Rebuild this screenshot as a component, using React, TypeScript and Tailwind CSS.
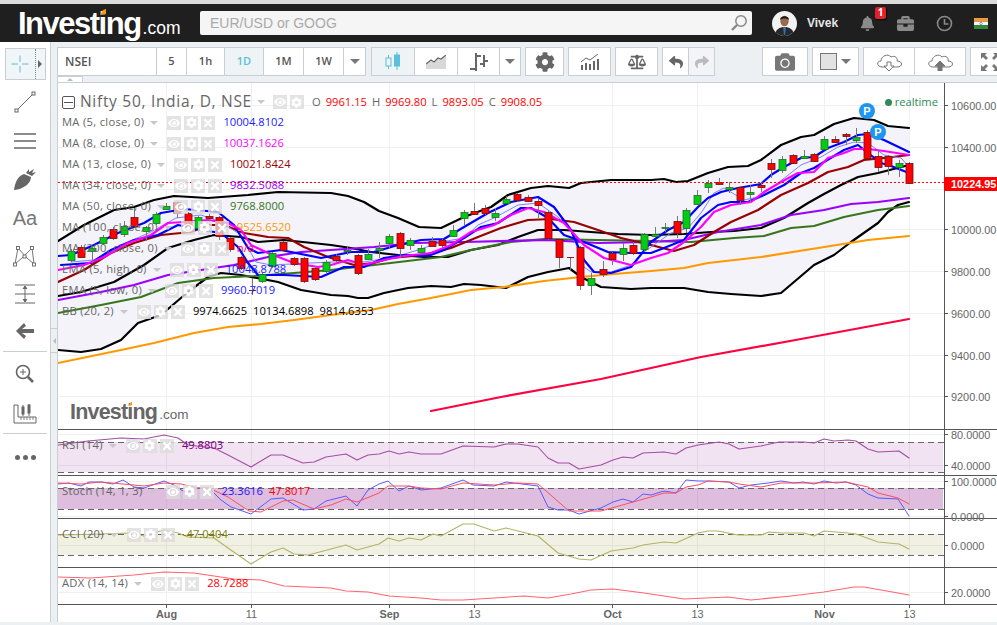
import React from "react";
import { FaCog, FaCamera, FaBell, FaBriefcase, FaReply, FaShare, FaEye, FaTimes, FaBalanceScale } from "react-icons/fa";

const pts = (a: number[][]) => a.map((p) => p.join(",")).join(" ");

const upper = [[57,241],[83,225],[113,210],[133,207],[153,200],[173,196],[207,198],[247,195],[277,192],[330,193],[347,196],[363,202],[378,211],[397,218],[418,227],[440,228],[463,217],[490,207],[507,195],[530,188],[547,186],[568,188],[580,183],[610,180],[650,180],[663,179],[675,182],[687,181],[707,173],[727,167],[747,166],[760,160],[780,145],[800,137],[813,135],[833,124],[853,118],[873,120],[887,126],[908,128]];
const lower = [[57,350],[80,352],[100,349],[120,340],[137,323],[160,315],[187,292],[207,277],[220,273],[240,275],[277,282],[300,290],[330,295],[347,296],[357,298],[367,298],[383,293],[407,288],[430,286],[450,287],[463,284],[480,285],[505,288],[527,277],[547,272],[563,269],[568,268],[580,277],[600,287],[630,289],[650,288],[683,288],[707,292],[730,294],[760,296],[780,293],[793,282],[813,265],[833,255],[850,242],[877,223],[887,212],[897,205],[908,202]];
const mid = [[57,296],[80,292],[113,282],[143,265],[167,248],[193,240],[213,235],[240,237],[257,242],[283,240],[330,245],[350,248],[370,252],[397,255],[423,257],[447,257],[470,250],[497,245],[517,237],[537,230],[563,230],[590,232],[617,234],[650,235],[683,234],[710,232],[733,231],[760,228],[783,218],[807,203],[823,194],[840,185],[857,177],[877,173],[908,165]];
const blueA = [[57,256],[70,255],[93,245],[117,233],[143,223],[160,213],[183,209],[217,212],[233,225],[247,248],[257,253],[280,250],[320,258],[350,252],[373,252],[397,245],[420,240],[443,239],[463,227],[487,213],[510,202],[537,197],[553,207],[570,230],[583,260],[593,272],[610,273],[630,267],[650,242],[667,230],[683,222],[697,207],[707,198],[720,192],[737,188],[760,184],[770,175],[783,167],[800,158],[813,157],[827,148],[843,142],[857,135],[867,134],[883,140],[908,152]];
const blueB = [[60,265],[90,263],[110,250],[133,240],[157,235],[177,225],[200,230],[220,233],[237,247],[247,263],[257,275],[283,275],[320,277],[343,267],[363,267],[383,258],[403,255],[427,256],[443,250],[463,238],[480,227],[497,223],[520,208],[530,208],[547,218],[563,235],[583,242],[607,252],[630,253],[650,253],[663,248],[683,240],[700,218],[717,205],[730,202],[747,202],[763,195],[783,185],[800,173],[813,168],[823,162],[843,150],[857,145],[867,153],[880,163],[890,166],[908,173]];
const thin = [[70,262],[93,260],[120,245],[150,232],[175,218],[200,215],[220,222],[240,235],[255,262],[270,265],[330,262],[363,262],[393,257],[417,250],[440,242],[463,238],[477,225],[493,218],[517,205],[537,203],[557,217],[570,230],[583,267],[590,272],[610,272],[630,265],[643,252],[650,247],[670,233],[687,228],[700,213],[713,193],[723,188],[743,200],[757,197],[777,183],[800,165],[820,157],[837,147],[853,142],[867,143],[883,155],[900,158],[908,167]];
const magenta = [[57,270],[83,265],[103,257],[127,243],[150,235],[167,223],[183,222],[207,220],[227,223],[240,230],[250,245],[267,253],[293,263],[317,267],[330,265],[347,260],[363,265],[383,260],[403,256],[430,253],[450,245],[470,232],[493,225],[510,215],[527,208],[543,212],[563,223],[583,245],[603,258],[630,265],[650,258],[667,253],[683,242],[700,227],[713,212],[730,205],[750,202],[763,192],[780,182],[797,173],[813,172],[827,158],[843,153],[853,149],[867,149],[883,151],[908,155]];
const darkRed = [[57,282],[83,270],[110,253],[133,243],[160,235],[190,232],[207,225],[223,225],[243,233],[267,237],[287,238],[303,247],[327,257],[353,265],[373,263],[390,258],[423,255],[450,248],[477,237],[500,228],[527,220],[550,219],[573,222],[597,230],[620,238],[650,245],[673,251],[693,245],[713,232],[730,222],[757,210],[780,195],[807,183],[827,172],[847,167],[863,160],[883,158],[908,155]];
const purple = [[57,300],[100,292],[133,285],[167,275],[200,270],[233,265],[267,257],[300,252],[330,250],[373,247],[413,243],[463,242],[547,240],[597,243],[650,242],[683,240],[717,232],[760,225],[790,215],[823,210],[850,204],[877,202],[908,198]];
const green = [[57,313],[100,305],[140,297],[177,283],[213,278],[253,276],[293,273],[330,270],[373,265],[440,257],[470,250],[510,242],[543,239],[650,241],[690,242],[733,238],[763,236],[790,228],[813,226],[843,217],[877,210],[908,206]];
const orange = [[57,363],[120,350],[153,343],[193,333],[227,327],[260,324],[293,320],[330,315],[370,310],[397,304],[430,298],[470,290],[503,287],[543,281],[580,277],[613,274],[650,271],[683,268],[707,263],[760,257],[817,248],[867,240],[908,236]];
const crimson = [[430,411],[500,397],[600,379],[700,357],[800,339],[908,319]];
const rsi = [[57,445],[87,441],[120,438],[143,439],[163,435],[177,438],[187,445],[213,448],[227,455],[250,467],[270,455],[282,455],[302,463],[313,462],[325,457],[345,454],[356,460],[367,455],[378,454],[388,451],[398,454],[408,452],[420,454],[440,454],[462,446],[493,447],[505,444],[517,444],[537,447],[547,458],[557,463],[568,463],[578,469],[600,465],[612,460],[622,457],[632,458],[642,453],[663,452],[675,454],[685,448],[697,445],[718,442],[728,444],[738,449],[760,446],[778,442],[790,442],[803,442],[813,443],[823,439],[833,441],[847,440],[855,441],[867,449],[877,452],[898,451],[908,458]];
const stochB = [[57,484],[68,483],[80,486],[88,482],[100,482],[112,484],[122,480],[133,487],[143,488],[163,481],[173,485],[185,493],[197,488],[208,488],[220,500],[230,507],[250,514],[270,499],[282,498],[302,510],[313,509],[325,501],[345,496],[356,506],[367,490],[378,484],[387,481],[398,491],[408,486],[420,490],[440,488],[462,480],[472,485],[493,486],[505,482],[537,486],[547,507],[557,510],[568,510],[578,514],[600,508],[612,502],[622,499],[632,502],[642,494],[650,495],[663,491],[675,493],[685,480],[697,481],[707,481],[728,482],[738,488],[750,485],[767,483],[780,481],[793,483],[802,482],[813,484],[823,481],[835,483],[845,482],[855,485],[867,494],[877,498],[897,499],[908,516]];
const stochR = [[57,483],[80,484],[100,482],[122,484],[143,486],[163,483],[180,484],[197,488],[208,488],[227,497],[248,511],[260,512],[282,501],[292,500],[313,509],[330,505],[345,499],[356,502],[378,493],[387,486],[408,486],[420,488],[440,489],[462,483],[493,485],[517,483],[537,484],[568,511],[600,511],[632,502],[650,497],[663,493],[675,493],[685,487],[697,485],[707,481],[728,482],[738,484],[760,487],[780,483],[813,483],[845,482],[867,487],[877,493],[897,498],[908,504]];
const cci = [[57,535],[100,534],[128,533],[143,536],[163,530],[177,533],[187,537],[213,538],[227,548],[250,564],[270,552],[282,548],[293,554],[307,555],[330,549],[345,545],[356,550],[367,547],[378,544],[387,538],[398,541],[408,538],[420,540],[432,534],[440,536],[462,524],[473,524],[493,531],[505,528],[537,536],[557,553],[578,559],[590,560],[610,551],[632,548],[642,545],[663,542],[675,543],[697,533],[707,531],[717,531],[737,535],[760,535],[768,532],[780,533],[803,533],[813,536],[823,531],[847,533],[855,534],[877,542],[898,544],[908,549]];
const adx = [[57,577],[90,578],[133,575],[163,572],[193,573],[233,579],[260,580],[283,586],[330,588],[345,591],[367,592],[388,596],[420,598],[440,600],[462,600],[493,598],[523,596],[547,598],[570,594],[590,590],[612,589],[643,593],[683,599],[727,597],[750,600],[790,596],[823,592],[853,587],[863,587],[897,593],[908,595]];

const candles: [number, number, number, number, number, string][] = [
[70,251,260,249,262,"g"],[80,247,257,245,258,"r"],[91,248,251,246,263,"g"],[102,237,243,235,245,"g"],[112,229,238,227,240,"r"],[123,226,234,221,237,"g"],[133,217,226,208,227,"r"],[145,227,231,226,241,"g"],[155,214,223,212,225,"g"],[165,206,209,203,209,"g"],[176,202,213,201,218,"r"],[187,213,227,212,229,"r"],[197,217,228,216,232,"g"],[208,216,218,214,222,"r"],[218,217,236,216,240,"r"],[229,238,249,237,252,"r"],[240,257,268,256,270,"r"],[251,290,290,278,295,"d"],[261,274,281,272,283,"g"],[271,253,266,252,268,"g"],[282,242,250,241,252,"r"],[293,258,264,257,266,"r"],[303,258,281,257,283,"r"],[314,268,279,266,281,"r"],[325,262,271,260,273,"g"],[335,256,260,254,263,"r"],[346,250,251,246,255,"g"],
[357,255,273,254,275,"r"],[367,254,259,249,260,"g"],[378,248,250,242,258,"g"],[388,236,243,234,249,"g"],[399,233,248,232,258,"r"],[409,240,245,238,250,"g"],[420,248,252,245,254,"g"],[431,241,246,237,246,"r"],[441,240,245,239,248,"r"],[452,230,236,225,237,"g"],[463,212,218,210,225,"g"],[473,211,214,203,215,"r"],[484,208,213,205,215,"r"],[494,213,217,208,221,"g"],[505,199,203,196,204,"g"],[516,194,200,193,202,"r"],[527,197,201,195,202,"r"],[537,201,205,199,218,"r"],[547,212,238,211,240,"r"],[558,239,257,238,268,"r"],[569,257,257,257,270,"d"],[579,247,285,246,290,"r"],[590,278,285,273,295,"g"],[602,269,274,261,277,"r"],[611,253,259,252,265,"r"],[622,248,254,243,261,"g"],[632,245,253,242,255,"r"],[643,234,249,233,252,"g"],[654,234,236,227,238,"g"],[664,227,228,223,232,"g"],[676,221,233,216,238,"r"],[685,210,228,208,233,"g"],[696,195,204,190,205,"g"],[707,183,187,180,193,"g"],[718,182,184,178,185,"r"],[728,187,189,182,193,"g"],[739,187,200,186,205,"r"],[749,192,194,185,203,"g"],[760,185,187,183,192,"r"],[770,163,169,159,178,"r"],[781,159,170,156,173,"g"],[792,155,163,154,164,"r"],[803,156,158,150,159,"g"],[813,154,161,153,162,"r"],[823,139,149,136,150,"g"],[834,139,142,136,143,"r"],[845,134,136,133,145,"r"],[855,137,140,128,143,"g"],[866,132,158,130,159,"r"],[877,156,167,150,172,"r"],[887,156,166,155,175,"r"],[898,163,167,160,177,"g"],[908,163,183,162,184,"r"],
];

const Line = ({ d, c, w = 2.2 }: { d: number[][]; c: string; w?: number }) => (
  <polyline points={pts(d)} fill="none" stroke={c} strokeWidth={w} strokeLinejoin="round" strokeLinecap="round" />
);

function Chart() {
  const grid = [165, 250, 388, 473, 611, 696, 823, 908];
  const hg = [105, 147, 189, 229, 271, 313, 355, 396, 434, 465, 481, 516, 545, 592];
  const ticks: [number, string][] = [[105,"10600.00"],[147,"10400.00"],[229,"10000.00"],[271,"9800.00"],[313,"9600.00"],[355,"9400.00"],[396,"9200.00"],[434,"80.0000"],[465,"40.0000"],[481,"100.0000"],[516,"0.0000"],[545,"0.0000"],[592,"20.0000"]];
  const xl: [number, string, boolean][] = [[165,"Aug",true],[250,"11",false],[388,"Sep",true],[473,"13",false],[611,"Oct",true],[696,"13",false],[823,"Nov",true],[908,"13",false]];
  const dash = "6 4";
  return (
    <svg viewBox="57 83 940 539" width={940} height={539} className="absolute left-0 top-0 block">
      {grid.map((x) => <line key={x} x1={x + 0.5} x2={x + 0.5} y1={83} y2={604} stroke="#f0f0f0" />)}
      {hg.map((y) => <line key={y} x1={57} x2={943} y1={y + 0.5} y2={y + 0.5} stroke="#f0f0f0" />)}

      <polygon points={pts([...upper, ...[...lower].reverse()])} fill="#f3f3f9" />
      <Line d={upper} c="#000" />
      <Line d={lower} c="#000" />
      <Line d={mid} c="#000" />
      <Line d={orange} c="#ff9900" />
      <Line d={green} c="#38761d" />
      <Line d={purple} c="#9900ff" />
      <Line d={darkRed} c="#990000" />
      <Line d={thin} c="#8080ff" w={1} />
      <Line d={blueB} c="#0000ff" />
      <Line d={blueA} c="#0000ff" />
      <Line d={magenta} c="#ff00ff" />
      <Line d={crimson} c="#ff0040" />

      {candles.map(([x, t, b, hi, lo, k], i) => (
        <g key={i}>
          <line x1={x + 0.5} x2={x + 0.5} y1={hi} y2={lo} stroke="#777" />
          {k === "d" ? (
            <line x1={x - 3} x2={x + 4} y1={t + 0.5} y2={t + 0.5} stroke="#8b1a1a" />
          ) : (
            <rect x={x - 3} y={t + 0.5} width={7} height={b - t} fill={k === "g" ? "#00cc11" : "#ff0000"} stroke={k === "g" ? "#2a6a2a" : "#6a1010"} strokeWidth={0.8} />
          )}
        </g>
      ))}

      <line x1={57} x2={943} y1={182.5} y2={182.5} stroke="#ff0000" strokeDasharray="2 2" />

      <circle cx={866} cy={111} r={8} fill="#1e96f0" />
      <text x={866} y={115} textAnchor="middle" fill="#fff" fontSize={11} fontWeight={700} fontFamily="Liberation Sans">P</text>
      <circle cx={877} cy={132} r={8} fill="#1e96f0" />
      <text x={877} y={136} textAnchor="middle" fill="#fff" fontSize={11} fontWeight={700} fontFamily="Liberation Sans">P</text>

      <rect x={57} y={442} width={885} height={30} fill="#800080" fillOpacity={0.11} />
      <rect x={57} y={488} width={885} height={21} fill="#800080" fillOpacity={0.26} />
      <rect x={57} y={534} width={885} height={21} fill="#808000" fillOpacity={0.11} />
      {[442, 472, 488, 509, 534, 555].map((y) => (
        <line key={y} x1={57} x2={943} y1={y + 0.5} y2={y + 0.5} stroke="#666" strokeDasharray={dash} />
      ))}
      <Line d={rsi} c="#a64ca6" w={1.1} />
      <Line d={stochB} c="#5a5aff" w={1} />
      <Line d={stochR} c="#ff4d5e" w={1} />
      <Line d={cci} c="#b3b366" w={1.1} />
      <Line d={adx} c="#ff6670" w={1.1} />

      {[429, 475, 518, 567, 604].map((y) => <line key={y} x1={57} x2={997} y1={y + 0.5} y2={y + 0.5} stroke="#555" />)}
      <line x1={943.5} x2={943.5} y1={83} y2={604} stroke="#555" />
      {ticks.map(([y, t]) => (
        <g key={t + y}>
          <line x1={943} x2={947} y1={y + 0.5} y2={y + 0.5} stroke="#555" />
          <text x={950} y={y + 4.5} fontSize={10.9} fill="#666" fontFamily="Liberation Sans">{t}</text>
        </g>
      ))}
      <rect x={943} y={177} width={54} height={14} fill="#ff0000" />
      <text x={950} y={188} fontSize={10.9} fontWeight={700} fill="#fff" fontFamily="Liberation Sans">10224.95</text>

      {xl.map(([x, t, b]) => (
        <g key={x}>
          <line x1={x + 0.5} x2={x + 0.5} y1={604} y2={608} stroke="#555" />
          <text x={x + 0.5} y={618} textAnchor="middle" fontSize={10.9} fontWeight={b ? 700 : 400} fill="#666" fontFamily="Liberation Sans">{t}</text>
        </g>
      ))}
    </svg>
  );
}

const Caret = () => <span className="ml-[6px] mr-[9px] h-0 w-0 border-x-[4px] border-t-[4px] border-x-transparent border-t-[#c8c8c8]" />;

const Btns = ({ x = true }: { x?: boolean }) => (
  <span className="flex gap-[3px]">
    <span className="flex h-[14px] w-[14px] items-center justify-center bg-[#dcdcdc]/80 text-white"><FaEye size={12} /></span>
    <span className="flex h-[14px] w-[14px] items-center justify-center bg-[#dcdcdc]/80 text-white"><FaCog size={11} /></span>
    {x && <span className="flex h-[14px] w-[14px] items-center justify-center bg-[#dcdcdc]/80 text-white"><FaTimes size={12} /></span>}
  </span>
);

const Row = ({ label, v }: { label: string; v: [string, string][] }) => (
  <div className="flex h-[21px] items-center whitespace-nowrap text-[11.2px] text-[#666]">
    <span className="tracking-[0.3px]">{label}</span>
    <Caret />
    <Btns />
    <span className="ml-[8px] flex gap-[6px]">
      {v.map(([t, c]) => <span key={t} style={{ color: c }}>{t}</span>)}
    </span>
  </div>
);

const Cell = ({ w, children, active, last }: { w: string; children?: React.ReactNode; active?: boolean; last?: boolean }) => (
  <div className={`flex items-center justify-center ${w} ${last ? "" : "border-r border-[#c8ced3]"} ${active ? "bg-[#eef3f6]" : "bg-white"}`}>{children}</div>
);

const TCaret = () => <span className="h-0 w-0 border-x-[5px] border-t-[5px] border-x-transparent border-t-[#777]" />;

const Group = ({ children, className = "" }: { children: React.ReactNode; className?: string }) => (
  <div className={`flex h-[29px] shrink-0 border border-[#c8ced3] ${className}`}>{children}</div>
);

const TText = ({ t, c = "text-[#555]" }: { t: string; c?: string }) => <span className={`text-[11px] font-semibold ${c}`}>{t}</span>;

const Logo = ({ big }: { big: boolean }) =>
  big ? (
    <div className="relative flex items-baseline font-['Liberation_Sans',sans-serif] text-white">
      <span className="text-[31px] font-bold leading-none tracking-[-1.5px]">Investing</span>
      <span className="ml-[2px] text-[17.5px] leading-none">.com</span>
      <svg width="6" height="6" className="absolute left-[82px] top-[1px]"><polygon points="0,6 3,1 6,0 6,5" fill="#f39c12" /></svg>
    </div>
  ) : (
    <div className="relative flex items-baseline font-['Liberation_Sans',sans-serif] text-[#666]">
      <span className="text-[21.5px] font-bold leading-none tracking-[-0.8px]">Investing</span>
      <span className="ml-[2px] text-[13.5px] leading-none">.com</span>
      <svg width="4" height="4" className="absolute left-[58px] top-[0px]"><polygon points="0,4 2,1 4,0 4,3" fill="#f39c12" /></svg>
    </div>
  );

const Side = ({ h, children }: { h: string; children: React.ReactNode }) => (
  <div className={`flex ${h} w-full items-center justify-center text-[#666]`}>{children}</div>
);

export default function App() {
  return (
    <div className="flex h-[625px] w-[997px] flex-col overflow-hidden bg-[#edf0f3] font-['Open_Sans',sans-serif]">
      <div className="h-[4px] shrink-0 bg-[#dcdcdc]" />
      {/* Header */}
      <header className="flex h-[38px] shrink-0 items-center bg-[#1f1f1f] pl-[18px]">
        <div className="w-[182px] shrink-0 pt-[1px]"><Logo big /></div>
        <div className="flex h-[24px] w-[552px] items-center justify-between rounded-[2px] bg-[#f5f5f5] pl-[10px] pr-[4px] font-['Liberation_Sans',sans-serif] text-[14px] text-[#aaa]">
          <span>EUR/USD or GOOG</span>
          <svg width="18" height="18" viewBox="0 0 18 18" fill="none" stroke="#888" strokeWidth="1.5"><circle cx="11" cy="7" r="5.2" /><line x1="7" y1="11" x2="2" y2="16" strokeWidth="2.4" /></svg>
        </div>
        <svg width="25" height="25" viewBox="0 0 25 25" className="ml-[20px] shrink-0">
          <clipPath id="av"><circle cx="12.5" cy="12.5" r="12.5" /></clipPath>
          <g clipPath="url(#av)">
            <rect width="25" height="25" fill="#f2f2f2" />
            <path d="M3 25 C3 18 8 16 12.5 16 C17 16 22 18 22 25Z" fill="#26292d" />
            <path d="M11 16 L14 16 L13 24 L12 24Z" fill="#3d6fa5" />
            <ellipse cx="12.5" cy="10" rx="4.2" ry="5.2" fill="#9a6a4a" />
            <path d="M8 9 C8 4 17 4 17 9 C15 7 10 7 8 9Z" fill="#1a1a1a" />
          </g>
        </svg>
        <span className="ml-[10px] font-['Liberation_Sans',sans-serif] text-[12px] font-bold text-[#e6e6e6]">Vivek</span>
        <div className="relative ml-[22px] text-[#8a8a8a]">
          <FaBell size={15} />
          <span className="absolute left-[15px] top-[-9px] flex h-[12px] w-[11px] items-center justify-center rounded-[2px] bg-[#e0202a] text-[10px] font-bold text-white shadow-[1px_1px_1px_#000]">1</span>
        </div>
        <span className="ml-[22px] text-[#8a8a8a]"><FaBriefcase size={17} /></span>
        <svg width="17" height="17" viewBox="0 0 17 17" fill="none" stroke="#8a8a8a" strokeWidth="1.6" className="ml-[22px]"><circle cx="8.5" cy="8.5" r="7" /><path d="M8.5 4 V9 H12.5" /></svg>
        <svg width="14" height="11" viewBox="0 0 14 11" className="ml-[21px]">
          <rect width="14" height="3.7" fill="#f29a3a" /><rect y="3.7" width="14" height="3.6" fill="#f4f4f4" /><rect y="7.3" width="14" height="3.7" fill="#2e8b3d" /><circle cx="7" cy="5.5" r="1.2" fill="none" stroke="#446" strokeWidth="0.5" />
        </svg>
      </header>

      <div className="flex min-h-0 flex-1">
        {/* Sidebar */}
        <aside className="flex w-[51px] shrink-0 flex-col items-center border-r border-[#c8ced3] bg-white">
          <div className="mt-[6px] flex h-[32px] w-[41px] shrink-0 border border-[#c8ced3] bg-[#f0f5f8]">
            <div className="flex w-[30px] items-center justify-center border-r border-dotted border-[#888]">
              <svg width="18" height="18" viewBox="0 0 18 18" stroke="#5bc0de" strokeWidth="1"><path d="M9 0.5 V7 M9 11 V17.5 M0.5 9 H7 M11 9 H17.5" /></svg>
            </div>
            <div className="flex flex-1 items-center justify-center"><span className="h-0 w-0 border-y-[4px] border-l-[4px] border-y-transparent border-l-[#666]" /></div>
          </div>
          <Side h="h-[41px] mt-[1px]"><svg width="22" height="22" viewBox="0 0 22 22" fill="none" stroke="#666"><rect x="1" y="18" width="3" height="3" /><rect x="18" y="1" width="3" height="3" /><line x1="4" y1="18" x2="18" y2="4" /></svg></Side>
          <Side h="h-[38px]"><svg width="22" height="16" viewBox="0 0 22 16" stroke="#666" strokeWidth="1.3"><path d="M0 1 H22 M0 8 H22 M0 15 H22" /></svg></Side>
          <Side h="h-[40px]"><svg width="22" height="22" viewBox="0 0 22 22" fill="#666"><path d="M0 21 C1 13 4 7 10 5 L17 8 C17 14 10 20 0 21Z" /><path d="M12 4 L15 0 L15 3 L20 0 L18 4 L22 3 L18 7Z" /></svg></Side>
          <Side h="h-[35px]"><span className="font-['Liberation_Sans',sans-serif] text-[20px] leading-none text-[#777]">Aa</span></Side>
          <Side h="h-[42px]"><svg width="24" height="24" viewBox="0 0 24 24" fill="none" stroke="#666" strokeWidth="0.9"><path d="M5 4 L2 20 M5 4 L14 14 L21 20 M19 4 L21 20 M19 4 L9 14 L2 20" /><rect x="3.5" y="2.5" width="3" height="3" fill="#fff" /><rect x="17.5" y="2.5" width="3" height="3" fill="#fff" /><rect x="0.5" y="19" width="3" height="3" fill="#fff" /><rect x="19.5" y="19" width="3" height="3" fill="#fff" /><rect x="10" y="11" width="3" height="3" fill="#fff" /></svg></Side>
          <Side h="h-[34px]"><svg width="20" height="20" viewBox="0 0 20 20" fill="none" stroke="#666"><path d="M0 1 H20 M0 10 H20 M0 19 H20 M10 2 V18" /><path d="M8 5 L10 2 L12 5 M8 15 L10 18 L12 15" fill="#666" /></svg></Side>
          <Side h="h-[40px]"><svg width="18" height="16" viewBox="0 0 18 16" fill="#666"><path d="M8 0 L0 8 L8 16 L10 13 L6 10 H18 V6 H6 L10 3Z" /></svg></Side>
          <div className="h-px w-[44px] shrink-0 bg-[#c8ced3]" />
          <Side h="h-[43px]"><svg width="20" height="20" viewBox="0 0 20 20" fill="none" stroke="#666"><circle cx="8" cy="8" r="6.5" strokeWidth="1.6" /><path d="M8 5 V11 M5 8 H11" /><line x1="13" y1="13" x2="18" y2="18" strokeWidth="2.6" /></svg></Side>
          <Side h="h-[38px]"><svg width="24" height="20" viewBox="0 0 24 20" fill="none" stroke="#666"><path d="M1 1 V19 H23 V13 H5 V1 Z" /><path d="M8 13 V16 M11 13 V16 M14 13 V16 M17 13 V16 M20 13 V16" strokeWidth="0.8" /><rect x="9" y="3" width="2" height="7" fill="#666" /><rect x="15" y="1" width="2" height="8" fill="#666" /><path d="M10 1 V12 M16 0 V12" /></svg></Side>
          <div className="h-px w-[44px] shrink-0 bg-[#c8ced3]" />
          <Side h="h-[46px]"><span className="flex gap-[3px]"><span className="h-[5px] w-[5px] rounded-full bg-[#666]" /><span className="h-[5px] w-[5px] rounded-full bg-[#666]" /><span className="h-[5px] w-[5px] rounded-full bg-[#666]" /></span></Side>
        </aside>

        <div className="relative w-[6px] shrink-0">
          <div className="absolute left-0 top-[286px] flex h-[25px] w-[6px] items-center justify-center border-y border-[#c8ced3]">
            <span className="h-0 w-0 border-y-[3px] border-r-[3px] border-y-transparent border-r-[#bbb]" />
          </div>
        </div>

        <main className="flex min-w-0 flex-1 flex-col">
          {/* Toolbar */}
          <div className="relative h-[41px] shrink-0 border-b border-[#c8ced3] pt-[5px]">
            <div className="flex gap-[4px]">
              <Group className="mr-[1px] w-[309px]">
                <Cell w="w-[99px] !justify-start pl-[7px]"><span className="text-[12px] font-semibold text-[#555]">NSEI</span></Cell>
                <Cell w="w-[30px]"><TText t="5" /></Cell>
                <Cell w="w-[38px]"><TText t="1h" /></Cell>
                <Cell w="w-[39px]" active><TText t="1D" c="text-[#5bc0de]" /></Cell>
                <Cell w="w-[40px]"><TText t="1M" /></Cell>
                <Cell w="w-[40px]"><TText t="1W" /></Cell>
                <Cell w="flex-1" last><TCaret /></Cell>
              </Group>
              <Group className="w-[150px]">
                <Cell w="w-[43px]" active>
                  <svg width="16" height="20" viewBox="0 0 16 20" stroke="#5bc0de" fill="none"><path d="M3.5 3 V17 M12 0 V18" /><rect x="1" y="6" width="5" height="8" fill="#eef3f6" /><rect x="9.5" y="3" width="5" height="11" fill="#5bc0de" /></svg>
                </Cell>
                <Cell w="w-[43px]">
                  <svg width="20" height="14" viewBox="0 0 20 14"><path d="M0 9 L5 5 L8 7 L12 3 L15 4 L20 0 V14 H0Z" fill="#d8d8d8" /><path d="M0 9 L5 5 L8 7 L12 3 L15 4 L20 0" fill="none" stroke="#666" strokeWidth="1.2" /></svg>
                </Cell>
                <Cell w="w-[42px]">
                  <svg width="18" height="18" viewBox="0 0 18 18" fill="none" stroke="#666" strokeWidth="2"><path d="M6 0 V18 M6 3 H11 M0 16 H6 M14 2 V14 M14 8 H18 M10 11 H14" /></svg>
                </Cell>
                <Cell w="flex-1" last><TCaret /></Cell>
              </Group>
              <Group className="w-[39px]"><Cell w="w-full" last><span className="text-[#666]"><FaCog size={20} /></span></Cell></Group>
              <Group className="w-[43px]"><Cell w="w-full" last>
                <svg width="18" height="16" viewBox="0 0 18 16" fill="#666"><rect x="0" y="11" width="2" height="5" /><rect x="4" y="9" width="2" height="7" /><rect x="8" y="10" width="2" height="6" /><rect x="12" y="7" width="2" height="9" /><rect x="16" y="5" width="2" height="11" /><path d="M0 8 L5 4 L9 6 L17 0" fill="none" stroke="#666" /></svg>
              </Cell></Group>
              <Group className="w-[43px]"><Cell w="w-full" last><span className="text-[#666]"><FaBalanceScale size={18} /></span></Cell></Group>
              <Group className="w-[53px]">
                <Cell w="w-[26px]"><span className="text-[#666]"><FaReply size={14} /></span></Cell>
                <Cell w="flex-1 !bg-[#f2f4f7]" last><span className="text-[#bbb]"><FaShare size={14} /></span></Cell>
              </Group>
              <div className="w-[39px] shrink-0" />
              <Group className="w-[46px]"><Cell w="w-full" last><span className="text-[#777]"><FaCamera size={20} /></span></Cell></Group>
              <Group className="w-[47px]"><Cell w="w-full gap-[4px]" last><span className="h-[17px] w-[17px] border border-[#777] bg-[#e2e2e2]" /><TCaret /></Cell></Group>
              <Group className="w-[103px]">
                <Cell w="w-[51px]">
                  <svg width="27" height="18" viewBox="0 0 27 18" fill="#fff" stroke="#777"><path d="M6 14 C1 14 0 8 5 8 C5 3 12 0 15 4 C19 2 22 5 21 8 C27 8 27 14 21 14Z" /><path d="M11 9 H15 V13 H18 L13 18 L8 13 H11Z" /></svg>
                </Cell>
                <Cell w="flex-1" last>
                  <svg width="27" height="18" viewBox="0 0 27 18" fill="#fff" stroke="#777"><path d="M6 14 C1 14 0 8 5 8 C5 3 12 0 15 4 C19 2 22 5 21 8 C27 8 27 14 21 14Z" /><path d="M11 18 V13 H8 L13 8 L18 13 H15 V18Z" fill="#777" /></svg>
                </Cell>
              </Group>
              <div className="flex h-[29px] w-[40px] shrink-0 items-center justify-center border border-[#c8ced3] bg-white">
                <svg width="18" height="18" viewBox="0 0 18 18" fill="#777"><path d="M0 0 H6 L4 2 L7 5 L5 7 L2 4 L0 6Z M18 0 H12 L14 2 L11 5 L13 7 L16 4 L18 6Z M0 18 H6 L4 16 L7 13 L5 11 L2 14 L0 12Z M18 18 H12 L14 16 L11 13 L13 11 L16 14 L18 12Z" /></svg>
              </div>
            </div>
            <div className="absolute bottom-0 left-0 flex h-[6px] w-[26px] items-center justify-center border-x border-t border-[#c8ced3] bg-white">
              <span className="h-0 w-0 border-x-[3px] border-b-[3px] border-x-transparent border-b-[#bbb]" />
            </div>
          </div>

          {/* Chart */}
          <div className="relative min-h-0 flex-1 border-l border-[#c8ced3] bg-white">
            <Chart />
            <div className="absolute left-[4px] top-[9px] flex flex-col">
              <div className="flex h-[20px] items-center whitespace-nowrap text-[#666]">
                <span className="mr-[5px] flex h-[13px] w-[13px] items-center justify-center rounded-[2px] border border-[#555]"><span className="h-px w-[9px] bg-[#555]" /></span>
                <span className="text-[15.5px] tracking-[0.7px]">Nifty 50, India, D, NSE</span>
                <span className="ml-[5px] mr-[8px] h-0 w-0 border-x-[4px] border-t-[4px] border-x-transparent border-t-[#c8c8c8]" />
                <Btns x={false} />
                <span className="ml-[8px] flex gap-[5px] text-[11.2px]">
                  <span>O</span><span className="text-[#ff0000]">9961.15</span>
                  <span>H</span><span className="text-[#ff0000]">9969.80</span>
                  <span>L</span><span className="text-[#ff0000]">9893.05</span>
                  <span>C</span><span className="text-[#ff0000]">9908.05</span>
                </span>
              </div>
              <Row label="MA (5, close, 0)" v={[["10004.8102", "#1a1aff"]]} />
              <Row label="MA (8, close, 0)" v={[["10037.1626", "#ff00ff"]]} />
              <Row label="MA (13, close, 0)" v={[["10021.8424", "#990000"]]} />
              <Row label="MA (34, close, 0)" v={[["9832.5088", "#9900ff"]]} />
              <Row label="MA (50, close, 0)" v={[["9768.8000", "#38761d"]]} />
              <Row label="MA (100, close, 0)" v={[["9525.6520", "#ff9900"]]} />
              <Row label="MA (200, close, 0)" v={[["n/a", "#ff0040"]]} />
              <Row label="EMA (5, high, 0)" v={[["10048.8788", "#1a1aff"]]} />
              <Row label="EMA (5, low, 0)" v={[["9960.7019", "#1a1aff"]]} />
              <Row label="BB (20, 2)" v={[["9974.6625", "#000"], ["10134.6898", "#000"], ["9814.6353", "#000"]]} />
            </div>
            <div className="absolute right-[59px] top-[11px] flex items-center gap-[3px] text-[11.2px] text-[#2e8b57]">
              <span className="h-[7px] w-[7px] rounded-full bg-[#2e8b57]" /><span>realtime</span>
            </div>
            <div className="absolute left-[12px] top-[319px]"><Logo big={false} /></div>
            <div className="absolute left-[4px] top-[352px]"><Row label="RSI (14)" v={[["49.8803", "#800080"]]} /></div>
            <div className="absolute left-[4px] top-[398px]"><Row label="Stoch (14, 1, 3)" v={[["23.3616", "#1a1aff"], ["47.8017", "#ff0000"]]} /></div>
            <div className="absolute left-[4px] top-[441px]"><Row label="CCI (20)" v={[["-47.0404", "#808000"]]} /></div>
            <div className="absolute left-[4px] top-[490px]"><Row label="ADX (14, 14)" v={[["28.7288", "#ff0000"]]} /></div>
          </div>
        </main>
      </div>
      <div className="h-[3px] shrink-0" />
    </div>
  );
}
